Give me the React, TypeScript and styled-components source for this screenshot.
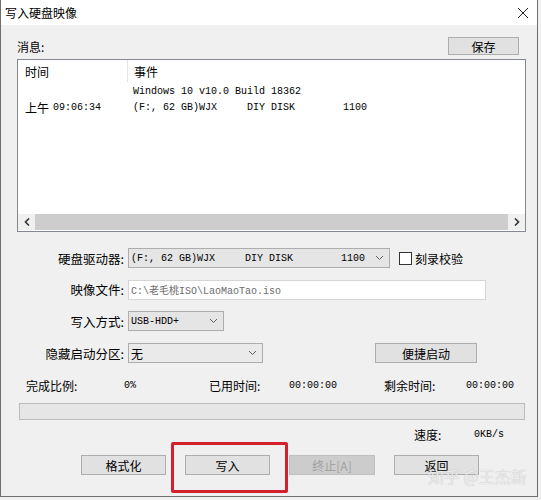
import styled, { createGlobalStyle } from 'styled-components';

const GlobalStyle = createGlobalStyle`
  body {
    margin: 0;
    background: #f0f0f0;
    font-family: "Noto Sans CJK SC", "Noto Sans", sans-serif;
    font-size: 12px;
    color: #000;
  }
`

const Window = styled.div`
  position: relative;
  width: 536px;
  height: 496px;
  border: 1px solid #6e6e6e;
  border-top: none;
  background: #f0f0f0;
  overflow: hidden;
`

const TitleBar = styled.div`
  height: 25px;
  background: #fff;
  display: flex;
  align-items: center;
  justify-content: space-between;
  padding: 0 8px 0 4px;
  font-size: 12px;
`

const Body = styled.div`
  padding: 12px 11px 0 16px;
`

const MsgHead = styled.div`
  display: flex;
  justify-content: space-between;
  align-items: center;
  height: 18px;
  padding-right: 7px;
`

const Btn = styled.button<{ $w: number; $h?: number }>`
  width: ${p => p.$w}px;
  height: ${p => p.$h ?? 20}px;
  padding: 0;
  background: #e1e1e1;
  border: 1px solid #adadad;
  font-family: "Noto Sans CJK SC", sans-serif;
  font-size: 12px;
  color: #000;
  &:disabled {
    background: #cccccc;
    border-color: #bfbfbf;
    color: #a0a0a0;
  }
`

const ListBox = styled.div`
  margin-top: 4px;
  height: 171px;
  border: 1px solid #828790;
  background: #fff;
  display: flex;
  flex-direction: column;
`

const ListHead = styled.div`
  display: grid;
  grid-template-columns: 109px 1fr;
  height: 22px;
  align-items: center;
  font-size: 12px;
`

const HeadCell = styled.div<{ $sep?: boolean }>`
  padding-left: ${p => (p.$sep ? 6 : 7)}px;
  height: 100%;
  display: flex;
  align-items: center;
  border-left: ${p => (p.$sep ? '1px solid #e5e5e5' : 'none')};
`

const Rows = styled.div`
  flex: 1;
  padding-top: 1px;
`

const Row = styled.div`
  display: grid;
  grid-template-columns: 115px 1fr;
  height: 16px;
  align-items: center;
`

const Mono = styled.span<{ $c?: string }>`
  font-family: "Liberation Mono", "DejaVu Sans Mono", "Noto Sans CJK SC", monospace;
  font-size: 10px;
  white-space: pre;
  color: ${p => p.$c ?? '#000'};
`

const TimeCell = styled.div`
  padding-left: 7px;
  display: flex;
  gap: 4px;
  align-items: center;
  font-size: 12px;
`

const HScroll = styled.div`
  height: 16px;
  margin-bottom: 1px;
  display: flex;
  background: #f0f0f0;
`

const Arrow = styled.div`
  width: 17px;
  display: flex;
  align-items: center;
  justify-content: center;
`

const Thumb = styled.div`
  flex: 1;
  background: #cdcdcd;
`

const Form = styled.div`
  margin-top: 16px;
  display: grid;
  grid-template-columns: 107px auto;
  column-gap: 4px;
  grid-auto-rows: 20px;
  row-gap: 11.7px;
  align-items: center;
`

const Label = styled.div`
  text-align: right;
  font-size: 12.5px;
`

const Line = styled.div`
  display: flex;
  align-items: center;
  height: 20px;
`

const Select = styled.div<{ $w: number; $light?: boolean }>`
  width: ${p => p.$w}px;
  height: 20px;
  box-sizing: border-box;
  border: 1px solid #adadad;
  background: ${p => (p.$light ? '#eaeaea' : '#e5e5e5')};
  display: flex;
  align-items: center;
  justify-content: space-between;
  padding: 0 5px 0 2px;
`

const TextInput = styled.div`
  width: 358px;
  height: 20px;
  box-sizing: border-box;
  border: 1px solid #d5d5d5;
  background: #fff;
  display: flex;
  align-items: center;
  padding-left: 2px;
  color: #6d6d6d;
`

const Check = styled.div`
  width: 11px;
  height: 11px;
  border: 1px solid #333;
  background: #fff;
  margin: 0 3px 0 9px;
`

const Spacer = styled.span<{ $w: number }>`
  width: ${p => p.$w}px;
`

const Stats = styled.div`
  margin-top: 14px;
  display: grid;
  grid-template-columns: 98px 85px 80px 95px 82px auto;
  padding-left: 9px;
  height: 16px;
  align-items: center;
`

const Progress = styled.div`
  margin: 10px 1px 0 2px;
  height: 15px;
  border: 1px solid #bcbcbc;
  background: #e6e6e6;
`

const Speed = styled.div`
  margin-top: 6px;
  display: grid;
  grid-template-columns: 60px auto;
  padding-left: 397px;
  height: 16px;
  align-items: center;
`

const Buttons = styled.div`
  margin-top: 13px;
  display: flex;
  gap: 19px;
  padding-left: 64px;
`

const Highlight = styled.div`
  position: absolute;
  left: 170px;
  top: 442px;
  width: 111px;
  height: 45px;
  border: 3px solid #d3202c;
  border-radius: 2px;
`

const Watermark = styled.div`
  position: absolute;
  left: 427px;
  top: 465px;
  font-size: 16px;
  line-height: 22px;
  color: rgba(255, 255, 255, 0.75);
  text-shadow: 0 0 1px #a8a8a8;
  pointer-events: none;
`

const Chevron = () => (
  <svg width="9" height="6" viewBox="0 0 9 6">
    <path d="M1 1l3.5 3.5L8 1" fill="none" stroke="#606060" strokeWidth="1" />
  </svg>
)

const diskText = '(F:, 62 GB)WJX     DIY DISK        1100'

function App() {
  return (
    <Window>
      <GlobalStyle />
      <TitleBar>
        <span>写入硬盘映像</span>
        <svg width="12" height="12" viewBox="0 0 12 12">
          <path d="M1 1l10 10M11 1L1 11" stroke="#222" strokeWidth="1" />
        </svg>
      </TitleBar>
      <Body>
        <MsgHead>
          <span>消息:</span>
          <Btn $w={71} $h={18}>保存</Btn>
        </MsgHead>
        <ListBox>
          <ListHead>
            <HeadCell>时间</HeadCell>
            <HeadCell $sep>事件</HeadCell>
          </ListHead>
          <Rows>
            <Row>
              <span />
              <Mono>Windows 10 v10.0 Build 18362</Mono>
            </Row>
            <Row>
              <TimeCell>
                上午 <Mono>09:06:34</Mono>
              </TimeCell>
              <Mono>{diskText}</Mono>
            </Row>
          </Rows>
          <HScroll>
            <Arrow>
              <svg width="6" height="8" viewBox="0 0 6 8">
                <path d="M5 0.5L1.5 4L5 7.5" fill="none" stroke="#333" strokeWidth="1.6" />
              </svg>
            </Arrow>
            <Thumb />
            <Arrow>
              <svg width="6" height="8" viewBox="0 0 6 8">
                <path d="M1 0.5L4.5 4L1 7.5" fill="none" stroke="#333" strokeWidth="1.6" />
              </svg>
            </Arrow>
          </HScroll>
        </ListBox>

        <Form>
          <Label>硬盘驱动器:</Label>
          <Line>
            <Select $w={262}>
              <Mono>{diskText}</Mono>
              <Chevron />
            </Select>
            <Check />
            <span>刻录校验</span>
          </Line>
          <Label>映像文件:</Label>
          <Line>
            <TextInput>
              <Mono $c="#6d6d6d">C:\老毛桃ISO\LaoMaoTao.iso</Mono>
            </TextInput>
          </Line>
          <Label>写入方式:</Label>
          <Line>
            <Select $w={96}>
              <Mono>USB-HDD+</Mono>
              <Chevron />
            </Select>
          </Line>
          <Label>隐藏启动分区:</Label>
          <Line>
            <Select $w={135} $light>
              <span>无</span>
              <Chevron />
            </Select>
            <Spacer $w={112} />
            <Btn $w={102}>便捷启动</Btn>
          </Line>
        </Form>

        <Stats>
          <span>完成比例:</span>
          <Mono>0%</Mono>
          <span>已用时间:</span>
          <Mono>00:00:00</Mono>
          <span>剩余时间:</span>
          <Mono>00:00:00</Mono>
        </Stats>
        <Progress />
        <Speed>
          <span>速度:</span>
          <Mono>0KB/s</Mono>
        </Speed>
        <Buttons>
          <Btn $w={85}>格式化</Btn>
          <Btn $w={85}>写入</Btn>
          <Btn $w={86} disabled>终止[A]</Btn>
          <Btn $w={85}>返回</Btn>
        </Buttons>
      </Body>
      <Highlight />
      <Watermark>知乎 @王杰新</Watermark>
    </Window>
  )
}

export default App
